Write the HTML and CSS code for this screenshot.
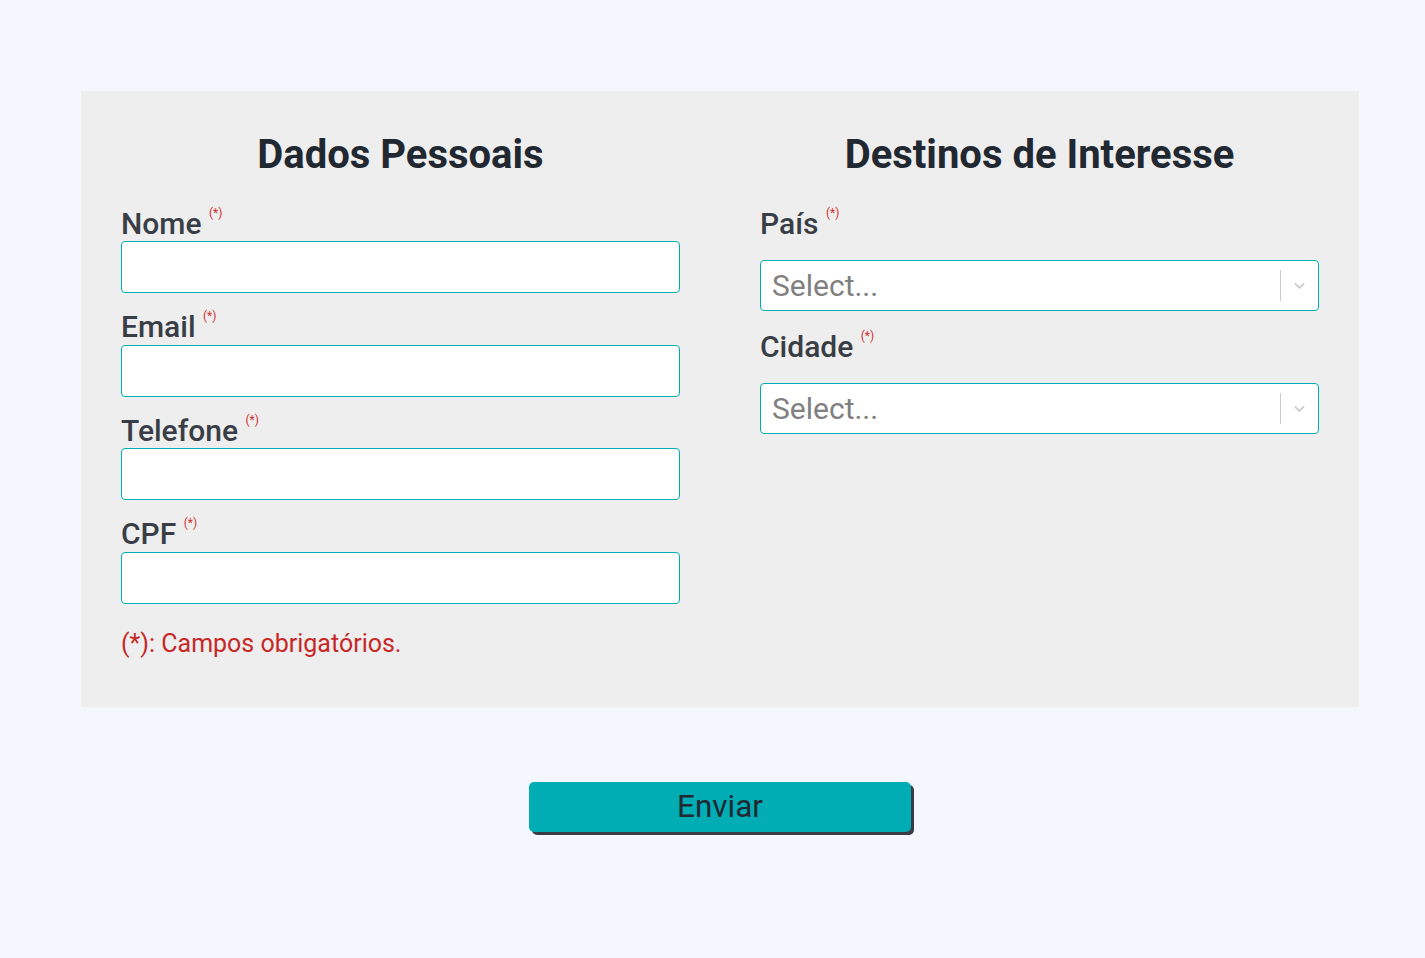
FILE: index.html
```html
<!DOCTYPE html>
<html lang="pt-BR">
<head>
<meta charset="utf-8">
<title>Formulário</title>
<link rel="stylesheet" href="styles.css">
</head>
<body>
<main class="page">
  <form class="card">
    <section class="column">
      <h2 class="title">Dados Pessoais</h2>
      <div class="fields">
        <div class="field">
          <label class="label">Nome <sup class="req">(*)</sup></label>
          <input class="input" type="text">
        </div>
        <div class="field">
          <label class="label">Email <sup class="req">(*)</sup></label>
          <input class="input" type="text">
        </div>
        <div class="field">
          <label class="label">Telefone <sup class="req">(*)</sup></label>
          <input class="input" type="text">
        </div>
        <div class="field">
          <label class="label">CPF <sup class="req">(*)</sup></label>
          <input class="input" type="text">
        </div>
      </div>
      <p class="note">(*): Campos obrigatórios.</p>
    </section>
    <section class="column">
      <h2 class="title">Destinos de Interesse</h2>
      <div class="selects">
        <div class="sfield">
          <label class="label">País <sup class="req">(*)</sup></label>
          <div class="select">
            <span class="placeholder">Select...</span>
            <span class="sep"></span>
            <span class="chev"><svg width="20" height="20" viewBox="0 0 20 20"><path d="M4.516 7.548c0.436-0.446 1.043-0.481 1.576 0l3.908 3.747 3.908-3.747c0.533-0.481 1.141-0.446 1.574 0 0.436 0.445 0.408 1.197 0 1.615-0.406 0.418-4.695 4.502-4.695 4.502-0.217 0.223-0.502 0.335-0.787 0.335s-0.570-0.112-0.789-0.335c0 0-4.287-4.084-4.695-4.502s-0.436-1.170 0-1.615z" fill="#cccccc"/></svg></span>
          </div>
        </div>
        <div class="sfield">
          <label class="label">Cidade <sup class="req">(*)</sup></label>
          <div class="select">
            <span class="placeholder">Select...</span>
            <span class="sep"></span>
            <span class="chev"><svg width="20" height="20" viewBox="0 0 20 20"><path d="M4.516 7.548c0.436-0.446 1.043-0.481 1.576 0l3.908 3.747 3.908-3.747c0.533-0.481 1.141-0.446 1.574 0 0.436 0.445 0.408 1.197 0 1.615-0.406 0.418-4.695 4.502-4.695 4.502-0.217 0.223-0.502 0.335-0.787 0.335s-0.570-0.112-0.789-0.335c0 0-4.287-4.084-4.695-4.502s-0.436-1.170 0-1.615z" fill="#cccccc"/></svg></span>
          </div>
        </div>
      </div>
    </section>
  </form>
  <div class="actions">
    <button class="button" type="button">Enviar</button>
  </div>
</main>
</body>
</html>
```

FILE: styles.css
```css
* { box-sizing: border-box; }

html, body {
  margin: 0;
  padding: 0;
}

body {
  background: #f4f7fd;
  font-family: Roboto, "Liberation Sans", sans-serif;
  color: #393e46;
}

.page {
  padding: 91px 0 0 81px;
  width: 1359px;
}

.card {
  width: 1278px;
  height: 616px;
  background: #eeeeee;
  padding: 40px 40px 0;
  display: grid;
  grid-template-columns: 559px 559px;
  column-gap: 80px;
  align-items: start;
  margin: 0;
}

.column {
  display: flex;
  flex-direction: column;
}

.title {
  margin: 0 0 28.5px;
  font-size: 40px;
  line-height: 47px;
  font-weight: 700;
  text-align: center;
  color: #222831;
}

.fields {
  display: flex;
  flex-direction: column;
  gap: 17px;
}

.field {
  display: flex;
  flex-direction: column;
}

.label {
  font-size: 30px;
  line-height: 34.5px;
  font-weight: 500;
  color: #393e46;
}

.req {
  font-size: 12px;
  font-weight: 400;
  color: #d32f2f;
  line-height: 0;
  vertical-align: 17px;
}

.input {
  display: block;
  width: 100%;
  height: 52px;
  margin: 0;
  border: 1px solid #00adb5;
  border-radius: 4px;
  background: #ffffff;
  font-family: inherit;
  font-size: 20px;
  outline: none;
}

.note {
  margin: 25px 0 0;
  font-size: 25px;
  line-height: 30px;
  color: #c62828;
}

.selects {
  display: flex;
  flex-direction: column;
  gap: 18.5px;
}

.sfield {
  display: flex;
  flex-direction: column;
  gap: 19px;
}

.select {
  height: 51px;
  border: 1px solid #00adb5;
  border-radius: 4px;
  background: #ffffff;
  display: flex;
  align-items: center;
}

.placeholder {
  flex: 1;
  padding-left: 11px;
  font-size: 30px;
  color: #808080;
}

.sep {
  width: 1px;
  height: 31px;
  background: #cccccc;
}

.chev {
  width: 37px;
  display: flex;
  align-items: center;
  justify-content: center;
}

.chev svg {
  width: 17px;
  height: 17px;
}

.actions {
  width: 1278px;
  display: flex;
  justify-content: center;
  padding: 75px 0 10px;
}

.button {
  -webkit-appearance: none;
  appearance: none;
  width: 382px;
  height: 50px;
  margin: 0;
  padding: 0;
  border: none;
  border-radius: 5px;
  background: #00adb5;
  box-shadow: 3px 3px 0 0 #393e46;
  font-family: inherit;
  font-size: 31.5px;
  line-height: 50px;
  color: #222831;
  cursor: pointer;
}
```
